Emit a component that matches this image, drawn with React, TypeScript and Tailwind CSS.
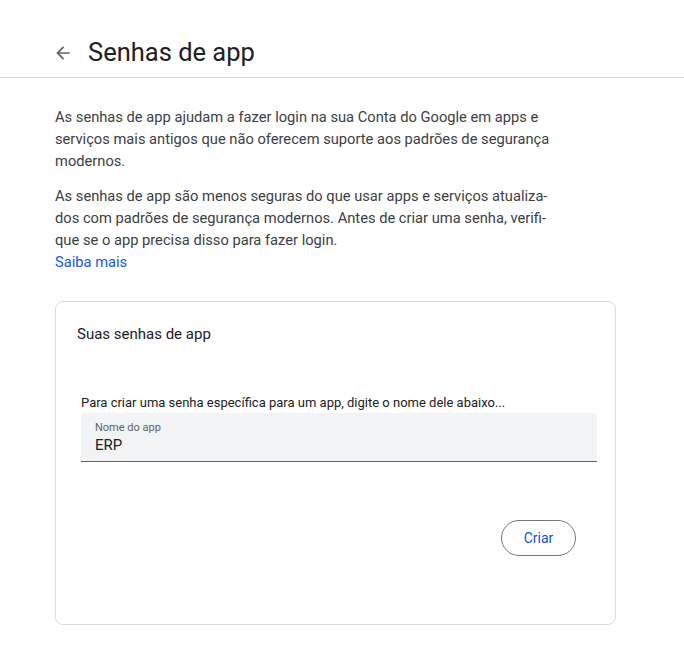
import React from "react";

export default function App() {
  return (
    <div className="w-[684px] h-[666px] bg-white text-[#3c4043]" style={{ fontFamily: "Roboto, 'Liberation Sans', sans-serif" }}>
      <header className="border-b border-[#dadce0] pt-[29px]">
        <div className="h-[48px] flex items-center pl-[53px]">
          <svg width="20" height="20" viewBox="0 0 24 24" className="text-[#5f6368]">
            <path d="M20 11H7.83l5.59-5.59L12 4l-8 8 8 8 1.41-1.41L7.83 13H20v-2z" fill="currentColor" />
          </svg>
          <h1 className="ml-[15px] text-[25.5px] text-[#202124] leading-none">Senhas de app</h1>
        </div>
      </header>
      <div className="pl-[55px] pt-[28px]">
        <p className="text-[14.7px] leading-[22px] text-[#3c4043]">
          As senhas de app ajudam a fazer login na sua Conta do Google em apps e<br />
          serviços mais antigos que não oferecem suporte aos padrões de segurança<br />
          modernos.
        </p>
        <p className="mt-[13px] text-[14.7px] leading-[22px] text-[#3c4043]">
          As senhas de app são menos seguras do que usar apps e serviços atualiza-<br />
          dos com padrões de segurança modernos. Antes de criar uma senha, verifi-<br />
          que se o app precisa disso para fazer login.
        </p>
        <a className="block text-[14.7px] leading-[22px] text-[#1a56e8]">Saiba mais</a>
        <div className="mt-[28px] w-[561px] h-[324px] border border-[#dadce0] rounded-[8px] pl-[21px] pt-[21px] flex flex-col">
          <div className="text-[15px] leading-[22px] text-[#202124]">Suas senhas de app</div>
          <div className="pl-[4px] mt-[50px] text-[13px] leading-[16px] text-[#202124]">Para criar uma senha específica para um app, digite o nome dele abaixo...</div>
          <div className="ml-[4px] mt-[2px] w-[516px] h-[49px] bg-[#f1f3f4] rounded-t-[4px] border-b border-[#5f6368] pl-[14px] pt-[8px]">
            <div className="text-[11px] leading-[13px] text-[#5f6368]">Nome do app</div>
            <div className="text-[15px] leading-[20px] text-[#202124] mt-[1px]">ERP</div>
          </div>
          <div className="flex justify-end pr-[39px] mt-[58px]">
            <button className="w-[75px] h-[36px] rounded-full border border-[#747775] text-[14px] text-[#0b57d0]">Criar</button>
          </div>
        </div>
      </div>
    </div>
  );
}
